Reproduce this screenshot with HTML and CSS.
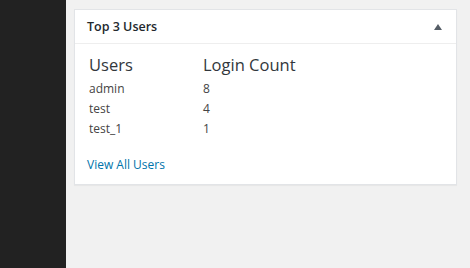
FILE: index.html
```html
<!DOCTYPE html>
<html lang="en">
<head>
  <meta charset="UTF-8" />
  <title>Dashboard</title>
  <link rel="stylesheet" href="styles.css">
</head>
<body>
  <div class="sidebar"></div>
  <div class="content">
    <div class="postbox">
      <div class="postbox-header">
        <h2>Top 3 Users</h2>
        <span class="toggle"></span>
      </div>
      <div class="inside">
        <table class="top-users">
          <thead>
            <tr><th>Users</th><th>Login Count</th></tr>
          </thead>
          <tbody>
            <tr><td>admin</td><td>8</td></tr>
            <tr><td>test</td><td>4</td></tr>
            <tr><td>test_1</td><td>1</td></tr>
          </tbody>
        </table>
        <a class="view-all" href="#">View All Users</a>
      </div>
    </div>
  </div>
</body>
</html>
```

FILE: styles.css
```css
* {
  box-sizing: border-box;
}
body {
  margin: 0;
  height: 268px;
  display: flex;
  background: #f1f1f1;
  font-family: "Open Sans", sans-serif;
  color: #444;
}
.sidebar {
  width: 66px;
  background: #222;
}
.content {
  padding: 9px 13px 0 8px;
  flex: 1;
}
.postbox {
  background: #fff;
  border: 1px solid #e2e4e7;
  box-shadow: 0 1px 1px rgba(0, 0, 0, 0.04);
}
.postbox-header {
  display: flex;
  align-items: center;
  justify-content: space-between;
  height: 34px;
  padding: 0 14px 0 12px;
  border-bottom: 1px solid #eee;
}
.postbox-header h2 {
  margin: 0;
  font-size: 12.5px;
  font-weight: 600;
  color: #23282d;
}
.toggle {
  width: 0;
  height: 0;
  border-left: 4px solid transparent;
  border-right: 4px solid transparent;
  border-bottom: 6px solid #555d66;
}
.inside {
  padding: 10px 12px 11px 12px;
}
.top-users {
  border-collapse: collapse;
  margin-left: 2px;
}
.top-users th {
  text-align: left;
  font-size: 16.5px;
  font-weight: 500;
  color: #32373c;
  padding: 0 0 2px;
  width: 114px;
  line-height: 22px;
}
.top-users td {
  font-size: 12px;
  padding: 0;
  height: 20px;
}
.view-all {
  display: block;
  margin-top: 18px;
  font-size: 12px;
  color: #0073aa;
  text-decoration: none;
}
```
